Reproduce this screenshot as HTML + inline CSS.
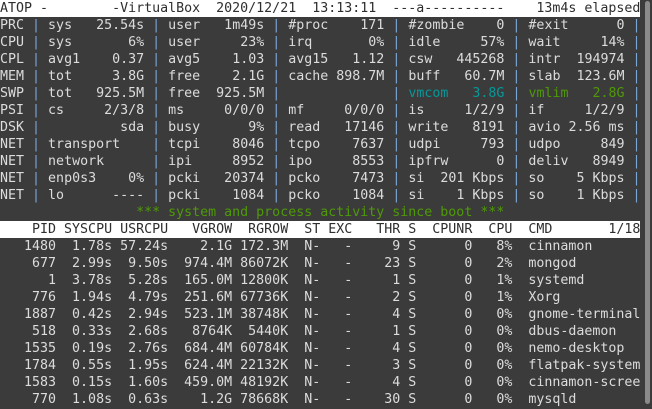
<!DOCTYPE html>
<html><head><meta charset="utf-8"><style>
html,body{margin:0;padding:0;background:#3b3b3b;width:652px;height:409px;overflow:hidden}
pre{margin:0;font-family:"DejaVu Sans Mono","Liberation Mono",monospace;font-size:13.3px;line-height:17px;color:#dcdcdc;white-space:pre;position:absolute;left:0;top:0}
.r{background:#ffffff;color:#2e2e2e;display:inline-block;width:640px}
.b{color:#7aa6d6}
.c{color:#06989a}
.g{color:#4e9a06}
.sb{position:absolute;left:645px;top:1px;width:5px;height:403px;background:#8a8a8a;border-radius:3px}
</style></head><body>
<pre><span class="r">ATOP -        -VirtualBox  2020/12/21  13:13:11  ---a----------    13m4s elapsed</span>
PRC <span class="b">|</span> sys   25.54s <span class="b">|</span> user   1m49s <span class="b">|</span> #proc    171 <span class="b">|</span> #zombie    0 <span class="b">|</span> #exit      0 <span class="b">|</span>
CPU <span class="b">|</span> sys       6% <span class="b">|</span> user     23% <span class="b">|</span> irq       0% <span class="b">|</span> idle     57% <span class="b">|</span> wait     14% <span class="b">|</span>
CPL <span class="b">|</span> avg1    0.37 <span class="b">|</span> avg5    1.03 <span class="b">|</span> avg15   1.12 <span class="b">|</span> csw   445268 <span class="b">|</span> intr  194974 <span class="b">|</span>
MEM <span class="b">|</span> tot     3.8G <span class="b">|</span> free    2.1G <span class="b">|</span> cache 898.7M <span class="b">|</span> buff   60.7M <span class="b">|</span> slab  123.6M <span class="b">|</span>
SWP <span class="b">|</span> tot   925.5M <span class="b">|</span> free  925.5M <span class="b">|</span>              <span class="b">|</span> <span class="c">vmcom   3.8G</span> <span class="b">|</span> <span class="g">vmlim   2.8G</span> <span class="b">|</span>
PSI <span class="b">|</span> cs     2/3/8 <span class="b">|</span> ms     0/0/0 <span class="b">|</span> mf     0/0/0 <span class="b">|</span> is     1/2/9 <span class="b">|</span> if     1/2/9 <span class="b">|</span>
DSK <span class="b">|</span>          sda <span class="b">|</span> busy      9% <span class="b">|</span> read   17146 <span class="b">|</span> write   8191 <span class="b">|</span> avio 2.56 ms <span class="b">|</span>
NET <span class="b">|</span> transport    <span class="b">|</span> tcpi    8046 <span class="b">|</span> tcpo    7637 <span class="b">|</span> udpi     793 <span class="b">|</span> udpo     849 <span class="b">|</span>
NET <span class="b">|</span> network      <span class="b">|</span> ipi     8952 <span class="b">|</span> ipo     8553 <span class="b">|</span> ipfrw      0 <span class="b">|</span> deliv   8949 <span class="b">|</span>
NET <span class="b">|</span> enp0s3    0% <span class="b">|</span> pcki   20374 <span class="b">|</span> pcko    7473 <span class="b">|</span> si  201 Kbps <span class="b">|</span> so    5 Kbps <span class="b">|</span>
NET <span class="b">|</span> lo      ---- <span class="b">|</span> pcki    1084 <span class="b">|</span> pcko    1084 <span class="b">|</span> si    1 Kbps <span class="b">|</span> so    1 Kbps <span class="b">|</span>
                 <span class="g">*** system and process activity since boot ***</span>
<span class="r">    PID SYSCPU USRCPU   VGROW  RGROW  ST EXC   THR S  CPUNR  CPU  CMD       1/18</span>
   1480  1.78s 57.24s    2.1G 172.3M  N-   -     9 S      0   8%  cinnamon
    677  2.99s  9.50s  974.4M 86072K  N-   -    23 S      0   2%  mongod
      1  3.78s  5.28s  165.0M 12800K  N-   -     1 S      0   1%  systemd
    776  1.94s  4.79s  251.6M 67736K  N-   -     2 S      0   1%  Xorg
   1887  0.42s  2.94s  523.1M 38748K  N-   -     4 S      0   0%  gnome-terminal
    518  0.33s  2.68s   8764K  5440K  N-   -     1 S      0   0%  dbus-daemon
   1535  0.19s  2.76s  684.4M 60784K  N-   -     4 S      0   0%  nemo-desktop
   1784  0.55s  1.95s  624.4M 22132K  N-   -     3 S      0   0%  flatpak-system
   1583  0.15s  1.60s  459.0M 48192K  N-   -     4 S      0   0%  cinnamon-scree
    770  1.08s  0.63s    1.2G 78668K  N-   -    30 S      0   0%  mysqld</pre>
<div class="sb"></div>
</body></html>
